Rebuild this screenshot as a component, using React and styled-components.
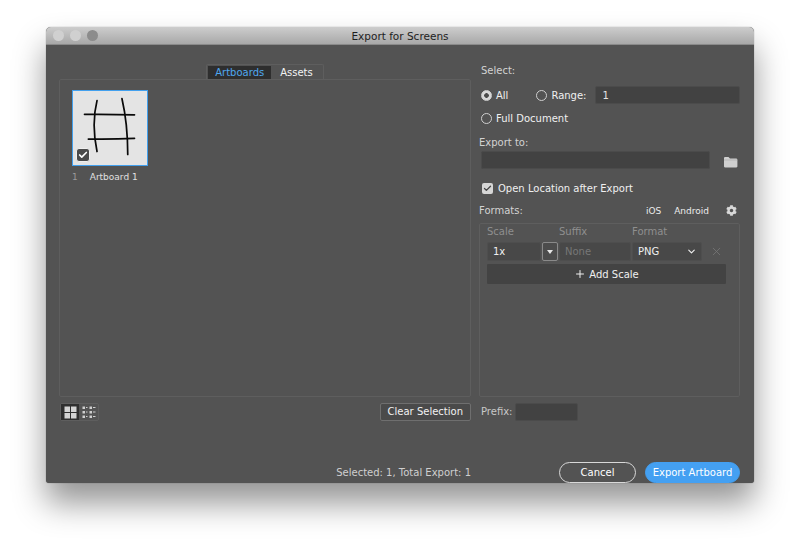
import styled, { createGlobalStyle } from 'styled-components';
import { FaCog } from 'react-icons/fa';
import { ChevronDown, X, Check, Plus } from 'lucide-react';

const GlobalStyle = createGlobalStyle`
  html, body { margin: 0; padding: 0; background: #fff; }
  body { width: 800px; height: 549px; overflow: hidden; font-family: "DejaVu Sans", sans-serif; }
  * { box-sizing: border-box; }
`;

const Page = styled.div`
  padding: 27px 46px 66px;
  height: 549px;
`;

const Window = styled.div`
  width: 708px;
  height: 456px;
  background: #535353;
  border-radius: 5px 5px 3px 3px;
  box-shadow: 0 0 1px rgba(0, 0, 0, 0.55), 0 20px 32px rgba(0, 0, 0, 0.42);
  display: flex;
  flex-direction: column;
  overflow: hidden;
  color: #e8e8e8;
  font-size: 10px;
`;

const TitleBar = styled.div`
  height: 18px;
  padding-left: 7px;
  display: flex;
  align-items: center;
  gap: 6px;
  position: relative;
  background: linear-gradient(#cdcdcd, #a8a8a8);
  border-bottom: 1px solid #8a8a8a;
  color: #1e1e1e;
  font-size: 10.5px;
`;

const Light = styled.span`
  width: 11px;
  height: 11px;
  border-radius: 50%;
  background: ${(p) => (p.$dark ? '#8c8c8c' : '#d0d0d0')};
`;

const Title = styled.span`
  position: absolute;
  left: 0;
  right: 0;
  text-align: center;
`;

const Body = styled.div`
  flex: 1;
  display: grid;
  grid-template-columns: 412px 261px;
  grid-template-rows: 333px 1fr;
  column-gap: 8px;
  padding: 19px 14px 0 13px;
`;

const LeftColumn = styled.div`
  display: flex;
  flex-direction: column;
  height: 333px;
`;

const Tabs = styled.div`
  align-self: center;
  height: 15px;
  display: flex;
  padding: 1px 1px 0;
  border: 1px solid #5e5e5e;
  border-bottom: none;
  border-radius: 2px 2px 0 0;
`;

const Tab = styled.div`
  padding: 0 ${(p) => (p.$active ? '7px' : '9px')};
  line-height: 14px;
  color: ${(p) => (p.$active ? '#4fa8ee' : '#f2f2f2')};
  background: ${(p) => (p.$active ? '#2e2e2e' : 'transparent')};
`;

const ArtPanel = styled.div`
  flex: 1;
  padding: 10px 12px;
  border: 1px solid #5e5e5e;
  border-radius: 2px;
`;

const Thumb = styled.div`
  position: relative;
  width: 76px;
  height: 76px;
  background: #e4e4e4;
  border: 1.5px solid #42a0ee;
`;

const CheckBadge = styled.span`
  position: absolute;
  left: 3px;
  bottom: 3px;
  width: 14px;
  height: 14px;
  border-radius: 3px;
  border: 1px solid #efefef;
  background: #4a4a4a;
  color: #fff;
  display: flex;
  align-items: center;
  justify-content: center;
`;

const ArtLabel = styled.div`
  margin-top: 5px;
  display: flex;
  gap: 12px;
  font-size: 9px;
  line-height: 12px;
  color: #e0e0e0;
  span:first-child { color: #9a9a9a; }
`;

const RightColumn = styled.div`
  display: flex;
  flex-direction: column;
  height: 333px;
`;

const FieldLabel = styled.div`
  line-height: 14px;
  color: #d2d2d2;
  padding-left: ${(p) => (p.$inset ? '2px' : '0')};
`;

const RadioRow = styled.div`
  display: flex;
  align-items: center;
  margin-top: ${(p) => p.$top || 0}px;
  padding-left: 2px;
  height: 18px;
`;

const Radio = styled.label`
  display: flex;
  align-items: center;
  gap: 4px;
  color: #f0f0f0;
  margin-right: ${(p) => p.$gap || 0}px;
  white-space: nowrap;
`;

const RadioDot = styled.span`
  width: 11px;
  height: 11px;
  border-radius: 50%;
  border: 1px solid #cfcfcf;
  background: ${(p) => (p.$on ? 'radial-gradient(circle, #4a4a4a 0 2px, #d8d8d8 2.6px)' : 'transparent')};
`;

const Input = styled.div`
  height: 18px;
  width: ${(p) => p.$width || 'auto'};
  flex: ${(p) => (p.$grow ? 1 : 'none')};
  padding: 0 6px;
  line-height: 18px;
  color: #e6e6e6;
  background: #424242;
  border: 1px solid #4b4b4b;
  border-radius: 2px;
`;

const ExportRow = styled.div`
  margin-top: 1px;
  padding-left: 2px;
  display: flex;
  align-items: center;
  gap: 13px;
  svg { margin-top: 4px; }
`;

const CheckRow = styled.label`
  margin-top: 10px;
  padding-left: 3px;
  display: flex;
  align-items: center;
  gap: 5px;
  height: 18px;
  color: #f0f0f0;
`;

const CheckBox = styled.span`
  width: 11px;
  height: 11px;
  border-radius: 2px;
  background: #d6d6d6;
  color: #444;
  display: flex;
  align-items: center;
  justify-content: center;
`;

const FormatsHead = styled.div`
  margin-top: 6px;
  height: 15px;
  display: flex;
  align-items: center;
  color: #d2d2d2;
`;

const Presets = styled.div`
  margin-left: auto;
  display: flex;
  align-items: center;
  font-size: 9px;
  color: #ececec;
  gap: 13px;
  padding-right: 3px;
  svg { margin-left: 4px; color: #d8d8d8; }
`;

const FormatsPanel = styled.div`
  flex: 1;
  margin-top: 5px;
  padding: 0 13px 0 7px;
  border: 1px solid #5e5e5e;
  border-radius: 2px;
`;

const FormatGrid = styled.div`
  display: grid;
  grid-template-columns: 54px 16px 72px 70px 1fr;
  column-gap: 1px;
  align-items: center;
  color: #8f8f8f;
`;

const ColHead = styled.div`
  height: 18px;
  line-height: 15px;
  grid-column: ${(p) => p.$col};
`;

const Cell = styled.div`
  height: 19px;
  line-height: 18px;
  padding-left: 5px;
  color: ${(p) => (p.$dim ? '#777' : '#f0f0f0')};
  background: #484848;
  border: 1px solid #4e4e4e;
  border-radius: 2px;
  display: flex;
  align-items: center;
  justify-content: space-between;
  padding-right: 4px;
`;

const DropButton = styled.div`
  height: 19px;
  background: #4c4c4c;
  border: 1px solid #8a8a8a;
  border-radius: 2px;
  display: flex;
  align-items: center;
  justify-content: center;
  &::after {
    content: '';
    border: 3.5px solid transparent;
    border-top: 4px solid #e6e6e6;
    border-bottom: none;
  }
`;

const Remove = styled.div`
  padding-left: 7px;
  display: flex;
  color: #777;
`;

const AddScale = styled.div`
  margin-top: 3px;
  height: 20px;
  background: #434343;
  color: #f0f0f0;
  display: flex;
  align-items: center;
  justify-content: center;
  gap: 3px;
  border-radius: 1px;
`;

const LeftTools = styled.div`
  display: flex;
  align-items: flex-start;
  justify-content: space-between;
  padding-top: 6px;
`;

const ViewToggle = styled.div`
  display: flex;
  margin-left: 1px;
  height: 18px;
  border: 1px solid #5e5e5e;
  border-radius: 2px;
`;

const ViewButton = styled.div`
  width: ${(p) => (p.$active ? '18px' : '19px')};
  display: flex;
  align-items: center;
  justify-content: center;
  background: ${(p) => (p.$active ? '#2f2f2f' : 'transparent')};
`;

const ClearButton = styled.div`
  height: 18px;
  padding: 0 7px;
  line-height: 16px;
  color: #f2f2f2;
  border: 1px solid #6f6f6f;
  border-radius: 2px;
  background: #4a4a4a;
  white-space: nowrap;
`;

const RightTools = styled.div`
  padding-top: 6px;
  padding-left: 2px;
  display: flex;
  align-items: flex-start;
  gap: 3px;
  color: #c8c8c8;
  line-height: 17px;
`;

const Footer = styled.div`
  grid-column: 1 / 3;
  margin-top: 19px;
  display: flex;
  align-items: center;
  justify-content: flex-end;
  height: 21px;
`;

const Status = styled.div`
  margin-right: 88px;
  color: #cfcfcf;
`;

const PillButton = styled.div`
  height: 21px;
  line-height: 19px;
  width: ${(p) => p.$width}px;
  margin-left: ${(p) => p.$gap || 0}px;
  border-radius: 11px;
  text-align: center;
  color: #fff;
  border: 1px solid ${(p) => (p.$primary ? '#44a0f2' : '#d8d8d8')};
  background: ${(p) => (p.$primary ? '#44a0f2' : 'transparent')};
  white-space: nowrap;
`;

function Artwork() {
  return (
    <svg width="73" height="73" viewBox="0 0 76 76" fill="none" stroke="#0a0a0a" strokeWidth="1.8" strokeLinecap="round">
      <path d="M25 10 Q19 34 25 63" />
      <path d="M51 8 Q57 34 57 66" />
      <path d="M12 24.3 Q38 24 64 24.8" />
      <path d="M16 50 Q40 50.5 64 49.3" />
    </svg>
  );
}

function FolderIcon() {
  return (
    <svg width="15" height="12" viewBox="0 0 15 12">
      <path d="M1 2.2 Q1 1 2 1 H5.5 L7 2.6 H13 Q14.4 2.6 14.4 4 V10.4 Q14.4 11.5 13 11.5 H2.4 Q1 11.5 1 10.4 Z" fill="#cfcfcf" />
      <path d="M1 4 H14.4" stroke="#a8a8a8" strokeWidth="0.6" />
    </svg>
  );
}

function GridIcon() {
  return (
    <svg width="13" height="13" viewBox="0 0 13 13" fill="#d4d4d4">
      <rect x="0.5" y="0.5" width="5.5" height="5.5" />
      <rect x="7" y="0.5" width="5.5" height="5.5" />
      <rect x="0.5" y="7" width="5.5" height="5.5" />
      <rect x="7" y="7" width="5.5" height="5.5" />
    </svg>
  );
}

function ListIcon() {
  const rows = [0.5, 5, 9.5];
  return (
    <svg width="14" height="13" viewBox="0 0 14 13" fill="#cfcfcf">
      {rows.map((y) => (
        <g key={y}>
          <rect x="0.5" y={y} width="2.5" height="2.5" />
          <rect x="4" y={y + 0.5} width="1.5" height="1" />
          <rect x="7.5" y={y} width="2.5" height="2.5" />
          <rect x="11" y={y + 0.5} width="2.5" height="1" />
        </g>
      ))}
    </svg>
  );
}

export default function App() {
  return (
    <>
      <GlobalStyle />
      <Page>
        <Window>
          <TitleBar>
            <Light />
            <Light />
            <Light $dark />
            <Title>Export for Screens</Title>
          </TitleBar>
          <Body>
            <LeftColumn>
              <Tabs>
                <Tab $active>Artboards</Tab>
                <Tab>Assets</Tab>
              </Tabs>
              <ArtPanel>
                <Thumb>
                  <Artwork />
                  <CheckBadge>
                    <Check size={10} strokeWidth={4} />
                  </CheckBadge>
                </Thumb>
                <ArtLabel>
                  <span>1</span>
                  <span>Artboard 1</span>
                </ArtLabel>
              </ArtPanel>
            </LeftColumn>
            <RightColumn>
              <FieldLabel $inset>Select:</FieldLabel>
              <RadioRow $top={8}>
                <Radio $gap={28}>
                  <RadioDot $on />
                  All
                </Radio>
                <Radio $gap={9}>
                  <RadioDot />
                  Range:
                </Radio>
                <Input $grow>1</Input>
              </RadioRow>
              <RadioRow $top={5}>
                <Radio>
                  <RadioDot />
                  Full Document
                </Radio>
              </RadioRow>
              <FieldLabel style={{ marginTop: 9 }}>Export to:</FieldLabel>
              <ExportRow>
                <Input $width="229px" />
                <FolderIcon />
              </ExportRow>
              <CheckRow>
                <CheckBox>
                  <Check size={9} strokeWidth={3.5} />
                </CheckBox>
                Open Location after Export
              </CheckRow>
              <FormatsHead>
                Formats:
                <Presets>
                  <span>iOS</span>
                  <span>Android</span>
                  <FaCog size={11} />
                </Presets>
              </FormatsHead>
              <FormatsPanel>
                <FormatGrid>
                  <ColHead $col="1 / 3">Scale</ColHead>
                  <ColHead $col="3">Suffix</ColHead>
                  <ColHead $col="4 / 6">Format</ColHead>
                  <Cell>1x</Cell>
                  <DropButton />
                  <Cell $dim>None</Cell>
                  <Cell>
                    PNG
                    <ChevronDown size={11} strokeWidth={2.5} />
                  </Cell>
                  <Remove>
                    <X size={13} strokeWidth={1.5} />
                  </Remove>
                </FormatGrid>
                <AddScale>
                  <Plus size={12} strokeWidth={2} />
                  Add Scale
                </AddScale>
              </FormatsPanel>
            </RightColumn>
            <LeftTools>
              <ViewToggle>
                <ViewButton $active>
                  <GridIcon />
                </ViewButton>
                <ViewButton>
                  <ListIcon />
                </ViewButton>
              </ViewToggle>
              <ClearButton>Clear Selection</ClearButton>
            </LeftTools>
            <RightTools>
              Prefix:
              <Input $width="63px" />
            </RightTools>
            <Footer>
              <Status>Selected: 1, Total Export: 1</Status>
              <PillButton $width={77}>Cancel</PillButton>
              <PillButton $width={95} $gap={9} $primary>Export Artboard</PillButton>
            </Footer>
          </Body>
        </Window>
      </Page>
    </>
  );
}
